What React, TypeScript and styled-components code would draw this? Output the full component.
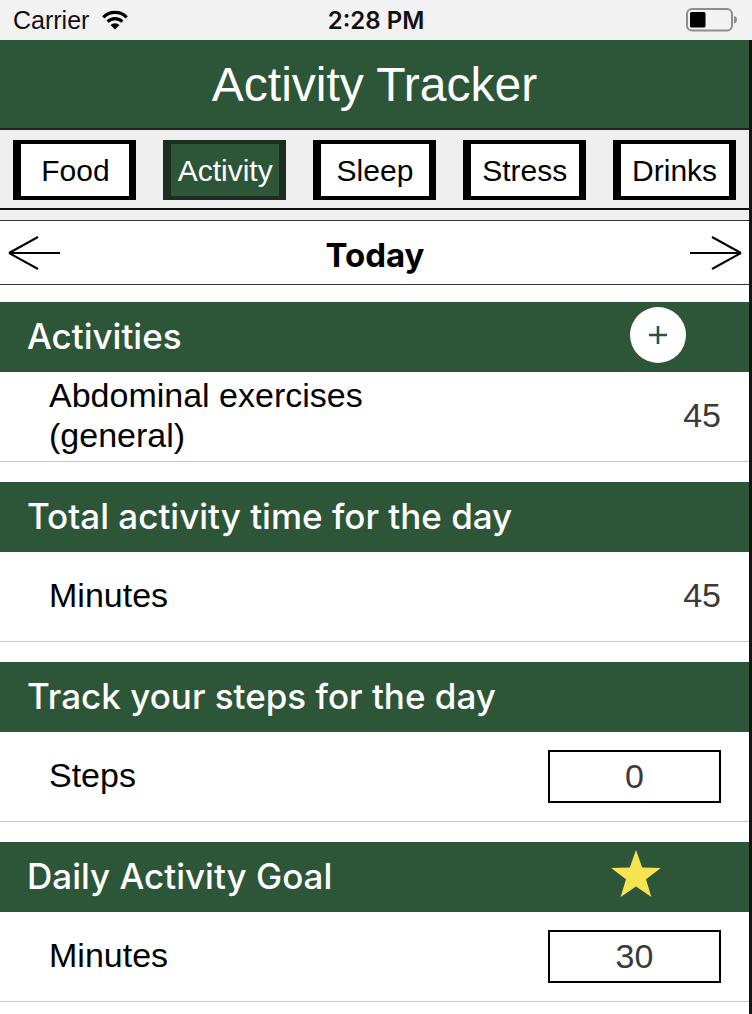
import React from "react";
import styled, { createGlobalStyle } from "styled-components";

const GREEN = "#2d5639";
const DARK_GREEN = "#1b2e20";

const Global = createGlobalStyle`
  html, body { margin: 0; padding: 0; background: #fff; }
  body { font-family: "Liberation Sans", Arial, sans-serif; }
  * { box-sizing: border-box; }
`;

const Screen = styled.div`
  width: 752px;
  min-height: 1014px;
  background: #fff;
  display: flex;
  flex-direction: column;
`;

const StatusBar = styled.div`
  height: 40px;
  background: #f2f2f2;
  display: grid;
  grid-template-columns: 1fr auto 1fr;
  align-items: center;
  padding: 0 13px;
`;

const Carrier = styled.div`
  display: flex;
  align-items: center;
  gap: 12px;
  font-size: 25px;
  color: #111;
`;

const Clock = styled.div`
  font-family: Inter, "Liberation Sans", sans-serif;
  font-weight: 600;
  font-size: 24px;
  color: #111;
`;

const BatteryWrap = styled.div`
  justify-self: end;
  display: flex;
  align-items: center;
`;

const Body = styled.div`
  flex: 1;
  display: flex;
  flex-direction: column;
  border-right: 3px solid #141414;
`;

const Header = styled.header`
  height: 88px;
  background: ${GREEN};
  display: flex;
  align-items: center;
  justify-content: center;
`;

const Title = styled.h1`
  margin: 0;
  font-weight: 400;
  font-size: 48px;
  color: #fff;
`;

const TabBar = styled.nav`
  background: #efefef;
  border-top: 2px solid #222;
  border-bottom: 2px solid #111;
  padding: 10px 0 8px;
  display: flex;
  justify-content: space-around;
`;

const Tab = styled.div<{ $active?: boolean }>`
  width: 123px;
  height: 60px;
  border-style: solid;
  border-width: 4px 7px 4px 8px;
  border-color: ${(p) => (p.$active ? DARK_GREEN : "#000")};
  background: ${(p) => (p.$active ? GREEN : "#fff")};
  color: ${(p) => (p.$active ? "#fff" : "#000")};
  font-size: 30px;
  display: flex;
  align-items: center;
  justify-content: center;
  padding-top: 1px;
`;

const Spacer = styled.div<{ $h: number; $bg?: string }>`
  height: ${(p) => p.$h}px;
  background: ${(p) => p.$bg || "#fff"};
`;

const DateNav = styled.div`
  height: 65px;
  border-top: 1px solid #333;
  border-bottom: 1px solid #333;
  display: flex;
  align-items: center;
  justify-content: space-between;
  padding: 0 6px 0 7px;
`;

const DateLabel = styled.div`
  font-family: Inter, "Liberation Sans", sans-serif;
  font-weight: 700;
  font-size: 33px;
  color: #000;
  margin-top: 4px;
`;

const Section = styled.section`
  display: flex;
  flex-direction: column;
  margin-bottom: 20px;
`;

const SectionHeader = styled.div`
  height: 70px;
  background: ${GREEN};
  display: flex;
  align-items: center;
  justify-content: space-between;
  padding-left: 27px;
`;

const SectionTitle = styled.h2`
  margin: 0 0 3px;
  font-family: Inter, "Liberation Sans", sans-serif;
  font-weight: 500;
  font-size: 35px;
  color: #fff;
`;

const HeaderIcon = styled.div<{ $right: number }>`
  margin-right: ${(p) => p.$right}px;
  margin-bottom: 5px;
  display: flex;
`;

const AddButton = styled.div`
  width: 56px;
  height: 56px;
  border-radius: 50%;
  background: #fff;
  display: flex;
  align-items: center;
  justify-content: center;
`;

const Row = styled.div`
  min-height: 90px;
  border-bottom: 1px solid #c8c8c8;
  display: flex;
  align-items: center;
  justify-content: space-between;
  padding: 0 28px 0 49px;
`;

const Label = styled.div`
  max-width: 420px;
  font-size: 34px;
  line-height: 40px;
  color: #000;
  margin-bottom: 3px;
`;

const Value = styled.div`
  font-size: 34px;
  color: #3a3a3a;
  margin-bottom: 2px;
`;

const InputBox = styled.div`
  width: 173px;
  height: 53px;
  border: 2px solid #000;
  display: flex;
  align-items: center;
  justify-content: center;
  font-size: 34px;
  color: #3a3a3a;
`;

const Wifi = () => (
  <svg width="28" height="20" viewBox="0 0 28 20">
    <path d="M2.3 7.3 A16.5 16.5 0 0 1 25.7 7.3" fill="none" stroke="#000" strokeWidth="3.2" />
    <path d="M6.6 11.6 A10.5 10.5 0 0 1 21.4 11.6" fill="none" stroke="#000" strokeWidth="3.2" />
    <path d="M14 19.5 L9.5 15 A6.4 6.4 0 0 1 18.5 15 Z" fill="#000" />
  </svg>
);

const Battery = () => (
  <svg width="53" height="24" viewBox="0 0 53 24">
    <rect x="1" y="1" width="45" height="21.5" rx="5" fill="none" stroke="#8e8e8e" strokeWidth="2" />
    <rect x="4" y="4" width="15.5" height="15.5" rx="1.5" fill="#000" />
    <path d="M48 8 Q51 8.5 51 11.75 Q51 15 48 15.5 Z" fill="#8e8e8e" />
  </svg>
);

const ArrowLeft = () => (
  <svg width="54" height="36" viewBox="0 0 54 36">
    <path d="M53 18 H2 M2 18 L31 2 M2 18 L31 34" fill="none" stroke="#000" strokeWidth="2" />
  </svg>
);

const ArrowRight = () => (
  <svg width="54" height="36" viewBox="0 0 54 36">
    <path d="M1 18 H52 M52 18 L23 2 M52 18 L23 34" fill="none" stroke="#000" strokeWidth="2" />
  </svg>
);

const Plus = () => (
  <svg width="20" height="20" viewBox="0 0 20 20">
    <path d="M10 1 V19 M1 10 H19" stroke={GREEN} strokeWidth="2.6" />
  </svg>
);

const Star = () => (
  <svg width="52" height="52" viewBox="0 0 52 52">
    <path
      d="M26 1 L32.2 18.5 L50.8 18.9 L36 30.2 L41.4 48.1 L26 37.4 L10.6 48.1 L16 30.2 L1.2 18.9 L19.8 18.5 Z"
      fill="#f7e451"
    />
  </svg>
);

const tabs = ["Food", "Activity", "Sleep", "Stress", "Drinks"];

export default function App() {
  return (
    <Screen>
      <Global />
      <StatusBar>
        <Carrier>
          Carrier
          <Wifi />
        </Carrier>
        <Clock>2:28 PM</Clock>
        <BatteryWrap>
          <Battery />
        </BatteryWrap>
      </StatusBar>
      <Body>
        <Header>
          <Title>Activity Tracker</Title>
        </Header>
        <TabBar>
          {tabs.map((t) => (
            <Tab key={t} $active={t === "Activity"}>
              {t}
            </Tab>
          ))}
        </TabBar>
        <Spacer $h={10} $bg="#efefef" />
        <DateNav>
          <ArrowLeft />
          <DateLabel>Today</DateLabel>
          <ArrowRight />
        </DateNav>
        <Spacer $h={17} />

        <Section>
          <SectionHeader>
            <SectionTitle>Activities</SectionTitle>
            <HeaderIcon $right={63}>
              <AddButton>
                <Plus />
              </AddButton>
            </HeaderIcon>
          </SectionHeader>
          <Row>
            <Label>Abdominal exercises (general)</Label>
            <Value>45</Value>
          </Row>
        </Section>

        <Section>
          <SectionHeader>
            <SectionTitle>Total activity time for the day</SectionTitle>
          </SectionHeader>
          <Row>
            <Label>Minutes</Label>
            <Value>45</Value>
          </Row>
        </Section>

        <Section>
          <SectionHeader>
            <SectionTitle>Track your steps for the day</SectionTitle>
          </SectionHeader>
          <Row>
            <Label>Steps</Label>
            <InputBox>0</InputBox>
          </Row>
        </Section>

        <Section>
          <SectionHeader>
            <SectionTitle>Daily Activity Goal</SectionTitle>
            <HeaderIcon $right={87}>
              <Star />
            </HeaderIcon>
          </SectionHeader>
          <Row>
            <Label>Minutes</Label>
            <InputBox>30</InputBox>
          </Row>
        </Section>
      </Body>
    </Screen>
  );
}
